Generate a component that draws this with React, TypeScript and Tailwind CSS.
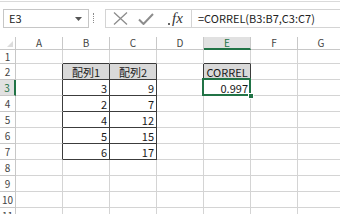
import React from 'react'

// Spreadsheet snapshot — Excel-like CORREL example

const COLS = ['A', 'B', 'C', 'D', 'E', 'F', 'G']
const ROWS = [1, 2, 3, 4, 5, 6, 7, 8, 9, 10, 11]

const DATA: Record<string, string> = {
  B2: '配列1',
  C2: '配列2',
  E2: 'CORREL',
  B3: '3',
  C3: '9',
  B4: '2',
  C4: '7',
  B5: '4',
  C5: '12',
  B6: '5',
  C6: '15',
  B7: '6',
  C7: '17',
  E3: '0.997',
}

const HEADS = new Set(['B2', 'C2', 'E2'])

function isTable(col: string, row: number) {
  return ((col === 'B' || col === 'C') && row >= 2 && row <= 7) || (col === 'E' && row === 2)
}

function borderClass(col: string, row: number) {
  if (isTable(col, row)) return 'border-r border-b border-[#3c3c3c]'
  if (col === 'A' && row >= 2 && row <= 7) return 'border-r border-b border-[#d4d4d4] border-r-[#3c3c3c]'
  if (col === 'D' && row === 2) return 'border-r border-b border-[#d4d4d4] border-r-[#3c3c3c]'
  if ((col === 'B' || col === 'C' || col === 'E') && row === 1)
    return 'border-r border-b border-[#d4d4d4] border-b-[#3c3c3c]'
  return 'border-r border-b border-[#d4d4d4]'
}

function Cell({ col, row }: { col: string; row: number }) {
  const id = `${col}${row}`
  const text = DATA[id]
  const head = HEADS.has(id)
  const selected = id === 'E3'
  return (
    <div
      className={`${borderClass(col, row)} ${head ? 'bg-[#d9d9d9] justify-center' : 'justify-end'} ${
        selected ? 'relative' : ''
      } flex items-end px-[2px] text-[11px] leading-[14px] text-[#1a1a1a] overflow-visible whitespace-nowrap`}
    >
      {text}
      {selected && (
        <>
          <div className="absolute -left-[2px] -top-[2px] -right-[1px] -bottom-[1px] border-2 border-[#217346]" />
          <div className="absolute -right-[4px] -bottom-[4px] w-[6px] h-[6px] bg-[#217346] border border-white" />
        </>
      )}
    </div>
  )
}

function FormulaBar() {
  return (
    <div className="h-[36px] border-t border-[#dadada] mt-[1px] flex items-start pt-[7px] pl-[3px]">
      <div className="w-[86px] h-[19px] border border-[#c6c6c6] flex items-center justify-between pl-[5px] pr-[6px]">
        <span className="text-[11px] text-[#222]">E3</span>
        <svg width="7" height="4" viewBox="0 0 7 4">
          <path d="M0 0h7L3.5 4z" fill="#555" />
        </svg>
      </div>
      <div className="ml-[4px] mt-[4px] h-[10px] border-l border-dotted border-[#8a8a8a]" />
      <div className="ml-[11px] flex-1 h-[19px] border border-r-0 border-[#d4d4d4] flex">
        <div className="w-[85px] relative flex items-center">
          <svg className="ml-[7px]" width="15" height="13" viewBox="0 0 15 13">
            <path d="M1 0.5L14 12.5M14 0.5L1 12.5" stroke="#8c8c8c" strokeWidth="1.3" fill="none" />
          </svg>
          <svg className="ml-[10px]" width="16" height="12" viewBox="0 0 16 12">
            <path d="M1 6.5L5.5 11L15 1" stroke="#8c8c8c" strokeWidth="2" fill="none" />
          </svg>
          <div className="absolute left-[62px] bottom-[2px] w-[2px] h-[2px] bg-[#666]" />
          <span
            className="ml-[18px] text-[15px] italic text-[#333] leading-none"
            style={{ fontFamily: '"Liberation Serif", serif' }}
          >
            fx
          </span>
        </div>
        <div className="flex-1 border-l border-[#d4d4d4] flex items-center pl-[6px] text-[11px] text-[#222] whitespace-nowrap">
          =CORREL(B3:B7,C3:C7)
        </div>
      </div>
    </div>
  )
}

export default function App() {
  return (
    <div
      className="w-[340px] h-[214px] overflow-hidden bg-white"
      style={{ fontFamily: '"Noto Sans CJK JP", "Liberation Sans", sans-serif' }}
    >
      <FormulaBar />
      <div className="grid grid-cols-[16px_repeat(7,47px)] grid-rows-[13px_14px_repeat(10,16px)]">
        {/* corner */}
        <div className="border-r border-b border-[#c8c8c8] relative">
          <svg className="absolute right-[2px] bottom-[2px]" width="6" height="6" viewBox="0 0 6 6">
            <path d="M6 0V6H0z" fill="#dcdcdc" />
          </svg>
        </div>
        {COLS.map((c) =>
          c === 'E' ? (
            <div
              key={c}
              className="border-r border-[#c8c8c8] border-b-2 border-b-[#217346] bg-[#e1e1e1] flex items-center justify-center text-[10px] leading-none text-[#217346]"
            >
              {c}
            </div>
          ) : (
            <div
              key={c}
              className="border-r border-b border-[#c8c8c8] flex items-center justify-center text-[10px] leading-none text-[#444]"
            >
              {c}
            </div>
          ),
        )}
        {ROWS.map((r) => (
          <React.Fragment key={r}>
            {r === 3 ? (
              <div className="border-r-2 border-r-[#217346] border-b border-b-[#c8c8c8] bg-[#e1e1e1] flex items-center justify-center text-[10px] leading-none text-[#217346]">
                {r}
              </div>
            ) : (
              <div className="border-r border-b border-[#c8c8c8] flex items-center justify-center text-[10px] leading-none text-[#444]">
                {r}
              </div>
            )}
            {COLS.map((c) => (
              <Cell key={c} col={c} row={r} />
            ))}
          </React.Fragment>
        ))}
      </div>
    </div>
  )
}
